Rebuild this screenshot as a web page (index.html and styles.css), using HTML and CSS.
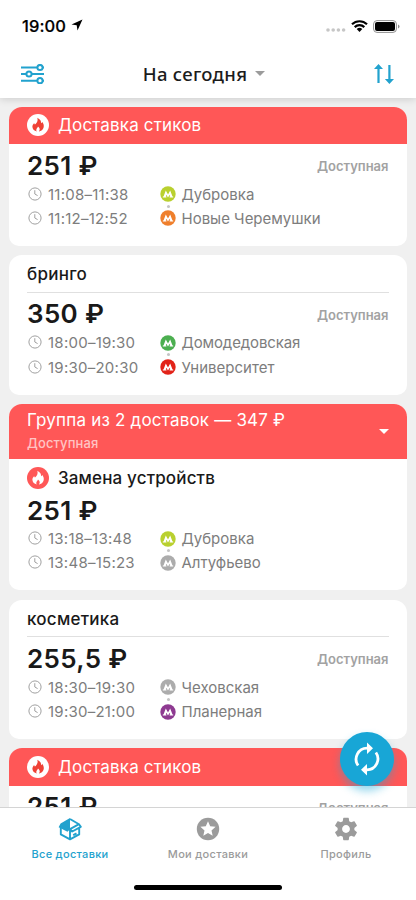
FILE: index.html
```html
<!DOCTYPE html>
<html lang="ru">
<head>
<meta charset="utf-8">
<title>Доставки</title>
<link rel="stylesheet" href="styles.css">
</head>
<body>
<svg class="sprite" aria-hidden="true">
  <symbol id="clock" viewBox="0 0 14 14"><circle cx="7" cy="7" r="6.1" fill="none" stroke="currentColor"/><path d="M6.8 3.2V7l2.8 1.6" fill="none" stroke="currentColor"/></symbol>
  <symbol id="metro" viewBox="0 0 16 16"><circle cx="8" cy="8" r="7.7" fill="currentColor"/><path d="M2.8 11.4v-.9h.7l2.3-6L8 8.4l2.2-3.9 2.3 6h.7v.9H9.6v-.9h.6l-.5-1.7L8 11.5 6.3 8.800l-.5 1.700h.6v.9z" fill="#fff"/></symbol>
  <symbol id="fire" viewBox="0 0 22 22"><circle cx="11" cy="11" r="11" fill="currentColor"/><path d="M10.2 3.7c3.1 1.4 4.2 3.4 3.8 5.5.7-.3 1-.8 1.1-1.5 1.5 1.8 2 3.9 1.5 5.8-.6 2.3-2.4 3.7-4.8 3.9 1.4-1.3 1.3-3-.8-4.8-.2 1.2-1.5 1.8-1.700 3.100-.1.7.1 1.200.500 1.700-2.500-.600-4.200-2.200-4.400-4.500-.1-1.600.8-2.800 1.800-4 .1.8.3 1.300.8 1.700C9.800 9 11.400 6.500 10.200 3.700z"/></symbol>
</svg>
<div class="screen">
  <header class="top">
    <div class="status">
      <span class="time">19:00</span>
      <svg class="loc" viewBox="0 0 12 12"><path d="M11.500.500.500 5.600l5.200.700.800 5.200z"/></svg>
      <svg class="signal" viewBox="0 0 20 4"><circle cx="2" cy="2" r="1.800"/><circle cx="7.200" cy="2" r="1.800"/><circle cx="12.400" cy="2" r="1.800"/><circle cx="17.600" cy="2" r="1.800"/></svg>
      <svg class="wifi" viewBox="0 0 17 12"><path d="M1 4.300a10.800 10.800 0 0 1 15 0M3.700 7.100a6.900 6.900 0 0 1 9.600 0" fill="none" stroke="#000" stroke-width="2.200"/><path d="M5.700 9.100a4 4 0 0 1 5.600 0L8.500 12z"/></svg>
      <svg class="battery" viewBox="0 0 27 13"><rect x=".6" y=".6" width="22.800" height="11.800" rx="3.400" fill="none" stroke="#909090"/><rect x="2" y="2" width="20" height="9" rx="2"/><path d="M25 4.500q1.500.500 1.500 2t-1.500 2z" fill="#909090"/></svg>
    </div>
    <div class="nav">
      <svg class="filter" viewBox="0 0 23 20" fill="none" stroke="currentColor" stroke-width="2"><path d="M0 3.500h16M22 3.500h1M0 10h5M11 10h12M0 16.700h16M22 16.700h1"/><circle cx="19" cy="3.500" r="2.600"/><circle cx="8" cy="10" r="2.600"/><circle cx="19" cy="16.700" r="2.600"/></svg>
      <div class="title">На сегодня<i class="caret"></i></div>
      <svg class="sort" viewBox="0 0 20 20" fill="currentColor"><path d="M4.500 0 9 5H5.600v14H3.400V5H0zM14.300 1h2.200v14H20l-4.600 5-4.500-5h3.400z"/></svg>
    </div>
  </header>

  <main class="list">
    <article class="card">
      <div class="urgent"><svg class="fire"><use href="#fire"/></svg><span>Доставка стиков</span></div>
      <div class="body">
        <div class="sum"><b>251 ₽</b><span class="state">Доступная</span></div>
        <div class="stop"><svg class="clock"><use href="#clock"/></svg><span class="hours">11:08–11:38</span><svg class="metro lime"><use href="#metro"/></svg><span>Дубровка</span></div>
        <div class="stop next"><svg class="clock"><use href="#clock"/></svg><span class="hours">11:12–12:52</span><svg class="metro orange"><use href="#metro"/></svg><span>Новые Черемушки</span></div>
      </div>
    </article>

    <article class="card">
      <div class="name">бринго</div>
      <div class="body">
        <div class="sum"><b>350 ₽</b><span class="state">Доступная</span></div>
        <div class="stop"><svg class="clock"><use href="#clock"/></svg><span class="hours">18:00–19:30</span><svg class="metro green"><use href="#metro"/></svg><span class="tight">Домодедовская</span></div>
        <div class="stop next"><svg class="clock"><use href="#clock"/></svg><span class="hours">19:30–20:30</span><svg class="metro red"><use href="#metro"/></svg><span>Университет</span></div>
      </div>
    </article>

    <article class="card">
      <div class="group"><div><div class="group-title">Группа из 2 доставок — 347 ₽</div><div class="group-state">Доступная</div></div><i class="caret light"></i></div>
      <div class="task"><svg class="fire invert"><use href="#fire"/></svg><span>Замена устройств</span></div>
      <div class="body compact">
        <div class="sum"><b>251 ₽</b></div>
        <div class="stop"><svg class="clock"><use href="#clock"/></svg><span class="hours">13:18–13:48</span><svg class="metro lime"><use href="#metro"/></svg><span>Дубровка</span></div>
        <div class="stop next"><svg class="clock"><use href="#clock"/></svg><span class="hours">13:48–15:23</span><svg class="metro gray"><use href="#metro"/></svg><span>Алтуфьево</span></div>
      </div>
    </article>

    <article class="card">
      <div class="name">косметика</div>
      <div class="body">
        <div class="sum"><b>255,5 ₽</b><span class="state">Доступная</span></div>
        <div class="stop"><svg class="clock"><use href="#clock"/></svg><span class="hours">18:30–19:30</span><svg class="metro gray"><use href="#metro"/></svg><span>Чеховская</span></div>
        <div class="stop next"><svg class="clock"><use href="#clock"/></svg><span class="hours">19:30–21:00</span><svg class="metro purple"><use href="#metro"/></svg><span>Планерная</span></div>
      </div>
    </article>

    <article class="card">
      <div class="urgent"><svg class="fire"><use href="#fire"/></svg><span>Доставка стиков</span></div>
      <div class="body">
        <div class="sum"><b>251 ₽</b><span class="state">Доступная</span></div>
      </div>
    </article>
    <button class="refresh" aria-label="Обновить"><svg viewBox="0 0 26 34" fill="none" stroke="#fff" stroke-width="2.800"><path d="M4.100 23.500A11 11 0 0 1 13 6.200h2M21.900 10.500A11 11 0 0 1 13 27.800h-2"/><path d="M13 .500 19 6.300l-6 5.800zM13 21.900v11.600l-6-5.800z" fill="#fff" stroke="none"/></svg></button>
  </main>

  <footer class="bottom">
    <nav class="tabs">
      <a class="tab active"><svg viewBox="0 0 24 24"><path d="M12 2 21 7.200 12 12.200M21 7.200l1.800 2.600-8.600 4.700L12 12.200M2.800 11v6.400L12 22.300l9.200-4.900V11.500M12 12.200v10M15.200 18.200l3.300-1.800" fill="none" stroke="currentColor" stroke-width="1.900" stroke-linejoin="round"/><path d="M12 .900V12.200L9.500 14.700.600 10.200 2.600 6.400z" fill="currentColor"/></svg><span>Все доставки</span></a>
      <a class="tab"><svg viewBox="0 0 24 24"><circle cx="12" cy="12" r="11.200" fill="currentColor"/><path d="m12 4.300 2.200 5 5.400.500-4.100 3.600 1.200 5.400-4.700-2.900-4.700 2.900 1.200-5.400-4.100-3.600 5.400-.500z" fill="#fff"/></svg><span>Мои доставки</span></a>
      <a class="tab"><svg viewBox="1.300 1.300 21.400 21.400"><path fill="currentColor" d="M19.430 12.980c.04-.32.07-.64.07-.98s-.03-.66-.07-.98l2.110-1.650c.19-.15.24-.42.12-.64l-2-3.460c-.12-.22-.39-.3-.61-.22l-2.490 1c-.52-.4-1.080-.73-1.690-.98l-.38-2.650C14.460 2.180 14.250 2 14 2h-4c-.25 0-.46.18-.49.42l-.38 2.650c-.61.25-1.170.59-1.690.98l-2.490-1c-.23-.09-.49 0-.61.22l-2 3.460c-.13.22-.07.49.12.64l2.110 1.650c-.04.32-.07.65-.07.98s.03.66.07.98l-2.110 1.650c-.19.15-.24.42-.12.64l2 3.460c.12.22.39.3.61.22l2.490-1c.52.4 1.080.73 1.690.98l.38 2.650c.03.24.24.42.49.42h4c.25 0 .46-.18.49-.42l.38-2.650c.61-.25 1.170-.59 1.690-.98l2.490 1c.23.09.49 0 .61-.22l2-3.460c.12-.22.07-.49-.12-.64l-2.110-1.650zM12 15.500c-1.930 0-3.500-1.570-3.500-3.500s1.570-3.500 3.500-3.500 3.500 1.570 3.500 3.500-1.570 3.500-3.500 3.500z"/></svg><span>Профиль</span></a>
    </nav>
    <div class="home"></div>
  </footer>
</div>
</body>
</html>
```
FILE: styles.css
```css
* { box-sizing: border-box; }
body { margin: 0; background: #fff; font-family: Inter, "Liberation Sans", sans-serif; color: #191919; }
svg { display: block; flex: none; }
.sprite { position: absolute; width: 0; height: 0; }
.screen { width: 416px; height: 900px; display: flex; flex-direction: column; overflow: hidden; }

.top { height: 98px; flex: none; background: #fff; box-shadow: 0 1px 8px rgba(0, 0, 0, .16); z-index: 1; }
.status { height: 50px; display: flex; align-items: center; padding: 2px 16px 0 22px; }
.time { font-size: 16.500px; font-weight: 500; letter-spacing: .1px; color: #000; -webkit-text-stroke: .2px #000; }
.loc { width: 12px; height: 12px; margin: -2px 0 0 5px; }
.signal { width: 20px; height: 4px; margin: 8px 5px 0 auto; fill: #c6c6c6; }
.wifi { width: 17px; height: 12px; }
.battery { width: 27px; height: 13px; margin-left: 5px; }
.nav { height: 48px; display: flex; align-items: center; justify-content: space-between; padding: 0 22px 1px 21px; color: #22a2ce; }
.filter { width: 23px; height: 20px; }
.sort { width: 20px; height: 20px; }
.title { display: flex; align-items: center; gap: 8px; margin-right: 10px; font: 500 18.500px "Noto Sans", sans-serif; letter-spacing: .3px; color: #1c1c1c; }
.caret { border: 5.500px solid transparent; border-top-color: #9b9b9b; border-bottom: 0; }
.caret.light { border-top-color: #fff; }

.list { position: relative; flex: 1; min-height: 0; overflow: hidden; background: #f0f0f0; padding: 8.500px 9px 0; display: flex; flex-direction: column; gap: 9.200px; }
.card { flex: none; background: #fff; border-radius: 13px 13px 10px 10px; overflow: hidden; }
.urgent { height: 37.500px; padding: 0 18px; display: flex; align-items: center; gap: 9px; background: #ff5757; color: #fff; font-size: 17px; letter-spacing: .15px; }
.fire { width: 22px; height: 22px; color: #fff; fill: #ef4136; }
.fire.invert { color: #ff5757; fill: #fff; }
.name { height: 37.500px; margin: 0 18px; border-bottom: 1px solid #e0e0e0; font-size: 17px; font-weight: 500; line-height: 38px; letter-spacing: .25px; }
.group { height: 55.500px; padding: 0 18px; display: flex; justify-content: space-between; align-items: center; background: #ff5757; color: #fff; }
.group-title { font-size: 17px; line-height: 23px; letter-spacing: .2px; }
.group-state { font-size: 13px; font-weight: 500; line-height: 22px; color: #ffc4c4; letter-spacing: .1px; }
.task { height: 37px; padding: 0 18px; display: flex; align-items: center; gap: 9px; font-size: 17px; font-weight: 500; letter-spacing: .15px; }
.body { height: 102px; padding: 4px 18px 0; }
.body.compact { height: 94px; padding-top: 0; }
.compact .sum { height: 30px; }
.compact .sum b { line-height: 29px; height: 30px; }
.sum { height: 34px; display: flex; align-items: center; justify-content: space-between; }
.sum b { font-size: 26px; font-weight: 600; line-height: 35px; letter-spacing: .35px; }
.state { font-size: 13px; font-weight: 600; color: #a2a2a2; padding-top: 2px; margin-right: .5px; }
.stop { position: relative; height: 24.300px; display: flex; align-items: center; font-size: 15px; color: #7d7d7d; }
.clock { width: 14px; height: 14px; margin: -1px 6px 0 1px; color: #a0a0a0; }
.hours { width: 112px; letter-spacing: .25px; }
.tight { letter-spacing: -.12px; }
.metro { width: 16px; height: 16px; margin-right: 5.500px; }
.next::before { content: ""; position: absolute; left: 140px; top: -1.500px; width: 3px; height: 3px; border-radius: 50%; background: #c4c4c4; }
.lime { color: #b9d02f; }
.orange { color: #ef7f2c; }
.green { color: #4caf50; }
.red { color: #e22319; }
.gray { color: #acacac; }
.purple { color: #8e3a91; }

.refresh { position: absolute; left: 340px; top: 634px; width: 54px; height: 54px; border: 0; border-radius: 50%; padding: 0; display: grid; place-items: center; background: #18a6d6; box-shadow: 0 5px 9px rgba(24, 166, 214, .45); }
.refresh svg { width: 26px; height: 34px; }

.bottom { height: 93px; flex: none; background: #fff; border-top: 1px solid #d4d4d4; }
.tabs { height: 77px; display: grid; grid-template-columns: repeat(3, 138px); justify-content: center; }
.tab { display: flex; flex-direction: column; align-items: center; gap: 6px; padding-top: 9px; color: #9b9b9b; font-size: 11px; font-weight: 500; line-height: 14px; letter-spacing: .3px; }
.tab svg { width: 24px; height: 24px; }
.active { color: #22a2ce; }
.home { width: 148px; height: 5px; margin: 0 auto; border-radius: 3px; background: #000; }
```
